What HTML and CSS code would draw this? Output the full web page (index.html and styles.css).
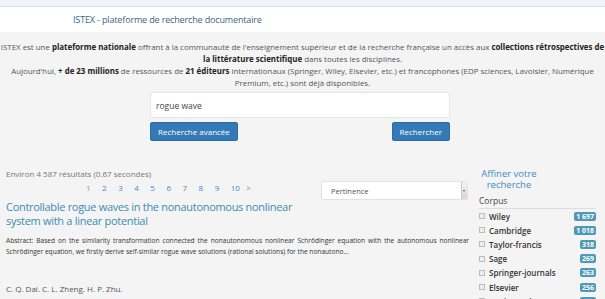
FILE: index.html
```html
<!DOCTYPE html>
<html lang="fr">
<head>
    <meta charset="UTF-8">
    <meta name="viewport" content="width=device-width, initial-scale=1.0">
    <title>ISTEX - plateforme de recherche documentaire</title>
    <link rel="stylesheet" href="styles.css">
</head>
<body>

    <div class="top-strip"></div>

    <!-- Header -->
    <header class="header">
        <span class="brand">ISTEX - plateforme de recherche documentaire</span>
    </header>

    <main class="page">

        <!-- Intro -->
        <p class="intro">
            ISTEX est une <strong>plateforme nationale</strong> offrant à la communauté de l'enseignement supérieur et de la recherche française un accès aux <strong>collections rétrospectives de la littérature scientifique</strong> dans toutes les disciplines.<br>
            Aujourd'hui, <strong>+ de 23 millions</strong> de ressources de <strong>21 éditeurs</strong> internationaux (Springer, Wiley, Elsevier, etc.) et francophones (EDP sciences, Lavoisier, Numérique Premium, etc.) sont déjà disponibles.
        </p>

        <!-- Search -->
        <form class="search">
            <input type="text" class="search-input" value="rogue wave">
            <div class="search-actions">
                <button type="button" class="btn">Recherche avancée</button>
                <button type="submit" class="btn">Rechercher</button>
            </div>
        </form>

        <div class="results-layout">

            <!-- Results -->
            <section class="results">
                <div class="stats">Environ 4 587 résultats (0.67 secondes)</div>

                <div class="results-bar">
                    <nav class="pager">
                        <span class="current">1</span>
                        <a href="#">2</a>
                        <a href="#">3</a>
                        <a href="#">4</a>
                        <a href="#">5</a>
                        <a href="#">6</a>
                        <a href="#">7</a>
                        <a href="#">8</a>
                        <a href="#">9</a>
                        <a href="#">10</a>
                        <a href="#" class="next">&gt;</a>
                    </nav>
                    <div class="sort">
                        <span>Pertinence</span>
                        <span class="sort-arrow"></span>
                    </div>
                </div>

                <article class="result">
                    <a href="#" class="result-title">Controllable rogue waves in the nonautonomous nonlinear system with a linear potential</a>
                    <p class="abstract">Abstract: Based on the similarity transformation connected the nonautonomous nonlinear Schrödinger equation with the autonomous nonlinear Schrödinger equation, we firstly derive self-similar rogue wave solutions (rational solutions) for the nonautono...</p>
                    <p class="authors">C. Q. Dai. C. L. Zheng. H. P. Zhu.</p>
                </article>
            </section>

            <!-- Facets -->
            <aside class="facets">
                <div class="facets-title">Affiner votre<br>recherche</div>
                <div class="facet-name">Corpus</div>
                <ul class="facet-list">
                    <li><span class="check"></span><span class="facet-label">Wiley</span><span class="badge">1 697</span></li>
                    <li><span class="check"></span><span class="facet-label">Cambridge</span><span class="badge">1 018</span></li>
                    <li><span class="check"></span><span class="facet-label">Taylor-francis</span><span class="badge">318</span></li>
                    <li><span class="check"></span><span class="facet-label">Sage</span><span class="badge">269</span></li>
                    <li><span class="check"></span><span class="facet-label">Springer-journals</span><span class="badge">263</span></li>
                    <li><span class="check"></span><span class="facet-label">Elsevier</span><span class="badge">256</span></li>
                    <li><span class="check"></span><span class="facet-label">Iop-journals</span><span class="badge">183</span></li>
                </ul>
            </aside>

        </div>
    </main>

</body>
</html>
```

FILE: styles.css
```css
body {
    margin: 0;
    background: #f4f4f4;
    font-family: "Open Sans", "DejaVu Sans", sans-serif;
    color: #555;
    overflow: hidden;
}

.top-strip {
    height: 6px;
    background: #f2f3f8;
    border-bottom: 1px solid #e2e3ea;
}

.header {
    background: #fff;
    height: 25px;
    padding-left: 73px;
    display: flex;
    align-items: center;
}

.brand {
    font-size: 9px;
    letter-spacing: -0.15px;
    color: #3d6580;
}

.page {
    padding: 0 9px 0 6px;
}

.intro {
    margin: 9px -9px 0 -6px;
    font-size: 7.9px;
    line-height: 12px;
    text-align: center;
    color: #555;
}

.intro strong {
    color: #222;
}

.search {
    width: 300px;
    margin: 3px 0 0 144px;
}

.search-input {
    display: block;
    width: 100%;
    box-sizing: border-box;
    height: 26px;
    padding: 0 5px;
    border: 1px solid #e6e6e6;
    border-radius: 2px;
    background: #fff;
    font-family: inherit;
    font-size: 8.5px;
    color: #444;
}

.search-actions {
    display: flex;
    justify-content: space-between;
    margin-top: 4px;
}

.btn {
    height: 19px;
    padding: 0 7px;
    background: #337ab7;
    border: 1px solid #2e6da4;
    border-radius: 2px;
    color: #fff;
    font-family: inherit;
    font-size: 8px;
    cursor: pointer;
}

.results-layout {
    display: grid;
    grid-template-columns: 463px 1fr;
    gap: 10px;
    margin-top: 27px;
}

.stats {
    font-size: 8px;
    color: #777;
}

.results-bar {
    display: flex;
    align-items: flex-start;
    margin-top: 3px;
}

.pager {
    width: 315px;
    padding-left: 80px;
    box-sizing: border-box;
    display: flex;
    gap: 11.5px;
    font-size: 8px;
}

.pager a {
    color: #428bca;
    text-decoration: none;
}

.pager .current {
    color: #999;
}

.pager .next {
    margin-left: -5px;
}

.sort {
    width: 147px;
    height: 19px;
    margin-top: -1px;
    box-sizing: border-box;
    display: flex;
    align-items: center;
    justify-content: space-between;
    padding-left: 9px;
    background: #fff;
    border: 1px solid #e2e2e2;
    border-radius: 2px;
    font-size: 7.5px;
    color: #555;
}

.sort-arrow {
    width: 5px;
    height: 17px;
    background: linear-gradient(#f4f4f4, #d6d6d6);
    border-left: 1px solid #ccc;
    position: relative;
}

.sort-arrow::after {
    content: "";
    position: absolute;
    left: 1px;
    top: 8px;
    border-left: 1px solid transparent;
    border-right: 1px solid transparent;
    border-top: 2px solid #555;
}

.result-title {
    display: block;
    width: 310px;
    margin-top: 0;
    font-size: 11px;
    letter-spacing: -0.3px;
    line-height: 14px;
    color: #3b8db0;
    text-decoration: none;
}

.abstract {
    margin: 7px 0 0;
    font-size: 6.6px;
    line-height: 11px;
    text-align: justify;
    color: #333;
}

.authors {
    margin: 26px 0 0;
    font-size: 8px;
    color: #555;
}

.facets-title {
    text-align: center;
    width: 60px;
    font-size: 9.5px;
    line-height: 11px;
    color: #428bca;
}

.facet-name {
    margin-top: 5px;
    padding-bottom: 2px;
    border-bottom: 1px solid #ddd;
    font-size: 8.5px;
    color: #444;
}

.facet-list {
    list-style: none;
    margin: 0;
    padding: 0;
}

.facet-list li {
    display: flex;
    align-items: center;
    height: 14.2px;
    font-size: 8px;
}

.check {
    width: 4px;
    height: 4px;
    border: 1px solid #bbb;
    background: #eee;
    margin-right: 4px;
}

.facet-label {
    flex: 1;
    font-weight: 600;
    color: #333;
}

.badge {
    padding: 0 2px;
    background: #4e9ab6;
    border-radius: 2px;
    color: #fff;
    font-size: 7px;
    font-weight: 700;
    line-height: 9px;
}
```
